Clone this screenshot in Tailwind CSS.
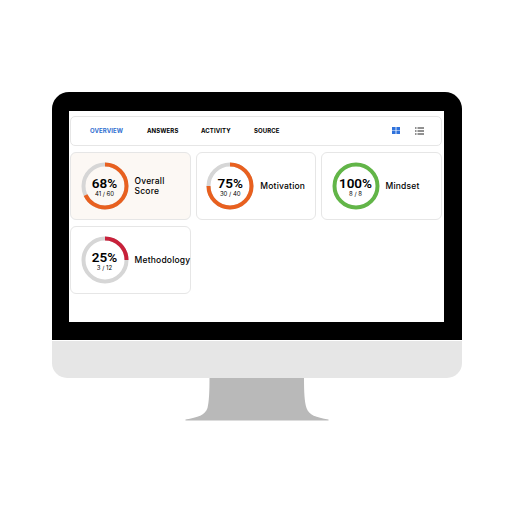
<!DOCTYPE html>
<html lang="en">
<head>
<meta charset="UTF-8">
<title>Overview</title>
<script src="https://cdn.jsdelivr.net/npm/@tailwindcss/browser@4"></script>
</head>
<body class="bg-white h-[513px] overflow-hidden font-['Inter',sans-serif] text-black">
<div class="w-[410.5px] ml-[51.5px] pt-[92px]">
  <!-- monitor frame -->
  <div class="bg-black h-[247.5px] rounded-t-[17px] pl-[17px] pr-[18px] pt-[18.5px]">
    <div class="bg-white h-[211px] pl-[1.5px] pr-[2.5px] pt-[5px]">
      <!-- tabs -->
      <div class="h-[30.5px] border-[1.5px] border-[#e6e6e6] rounded-[5px] flex items-center pl-[19px] pr-[16.5px] text-[6px] font-bold tracking-[0.1px]">
        <span class="w-[57px] text-[#2f6fd0]">OVERVIEW</span>
        <span class="w-[54px]">ANSWERS</span>
        <span class="w-[53px]">ACTIVITY</span>
        <span>SOURCE</span>
        <svg class="ml-auto" width="8" height="7" viewBox="0 0 8 7"><path fill="#2f72dc" d="M0 0h3.6v3.2H0zM4.4 0H8v3.2H4.4zM0 3.8h3.6V7H0zM4.4 3.8H8V7H4.4z"/></svg>
        <svg class="ml-[15px]" width="9" height="8" viewBox="0 0 9 8"><path stroke="#222" stroke-width="1" d="M0 1h1.5M2.5 1h6.5M0 4h1.5M2.5 4h6.5M0 7h1.5M2.5 7h6.5"/></svg>
      </div>
      <!-- score cards -->
      <div class="grid grid-cols-[120.5px_120px_120.5px] gap-x-[5.25px] gap-y-[5.5px] mt-[5.5px]">
        <div class="h-[68.5px] bg-[#fcf8f4] border-[1.5px] border-[#e6e6e6] rounded-[6px] flex items-center pl-[9.5px]">
          <div class="relative w-[48px] h-[48px] shrink-0">
            <svg width="48" height="48" viewBox="0 0 48 48" class="-rotate-90">
              <circle cx="24" cy="24" r="21.5" fill="none" stroke="#d6d6d6" stroke-width="4"/>
              <circle cx="24" cy="24" r="21.5" fill="none" stroke="#e8601f" stroke-width="4" pathLength="100" stroke-dasharray="68 100"/>
            </svg>
            <div class="absolute inset-0 flex flex-col items-center justify-center pt-[3px] font-['Roboto',sans-serif]">
              <span class="text-[13.5px] font-semibold leading-[13px]">68%</span>
              <span class="text-[6px] leading-[8px] font-['Inter',sans-serif]">41 / 60</span>
            </div>
          </div>
          <span class="ml-[6px] text-[8.5px] font-medium leading-[10px] tracking-[0.2px]">Overall<br>Score</span>
        </div>
        <div class="h-[68.5px] bg-white border-[1.5px] border-[#e6e6e6] rounded-[6px] flex items-center pl-[9.5px]">
          <div class="relative w-[48px] h-[48px] shrink-0">
            <svg width="48" height="48" viewBox="0 0 48 48" class="-rotate-90">
              <circle cx="24" cy="24" r="21.5" fill="none" stroke="#d6d6d6" stroke-width="4"/>
              <circle cx="24" cy="24" r="21.5" fill="none" stroke="#e8601f" stroke-width="4" pathLength="100" stroke-dasharray="75 100"/>
            </svg>
            <div class="absolute inset-0 flex flex-col items-center justify-center pt-[3px] font-['Roboto',sans-serif]">
              <span class="text-[13.5px] font-semibold leading-[13px]">75%</span>
              <span class="text-[6px] leading-[8px] font-['Inter',sans-serif]">30 / 40</span>
            </div>
          </div>
          <span class="ml-[6px] text-[8.5px] font-medium leading-[10px] tracking-[0.2px]">Motivation</span>
        </div>
        <div class="h-[68.5px] bg-white border-[1.5px] border-[#e6e6e6] rounded-[6px] flex items-center pl-[9.5px]">
          <div class="relative w-[48px] h-[48px] shrink-0">
            <svg width="48" height="48" viewBox="0 0 48 48" class="-rotate-90">
              <circle cx="24" cy="24" r="21.5" fill="none" stroke="#62b548" stroke-width="4"/>
            </svg>
            <div class="absolute inset-0 flex flex-col items-center justify-center pt-[3px] font-['Roboto',sans-serif]">
              <span class="text-[13.5px] font-semibold leading-[13px]">100%</span>
              <span class="text-[6px] leading-[8px] font-['Inter',sans-serif]">8 / 8</span>
            </div>
          </div>
          <span class="ml-[6px] text-[8.5px] font-medium leading-[10px] tracking-[0.2px]">Mindset</span>
        </div>
        <div class="h-[68.5px] bg-white border-[1.5px] border-[#e6e6e6] rounded-[6px] flex items-center pl-[9.5px]">
          <div class="relative w-[48px] h-[48px] shrink-0">
            <svg width="48" height="48" viewBox="0 0 48 48" class="-rotate-90">
              <circle cx="24" cy="24" r="21.5" fill="none" stroke="#d6d6d6" stroke-width="4"/>
              <circle cx="24" cy="24" r="21.5" fill="none" stroke="#c8213a" stroke-width="4" pathLength="100" stroke-dasharray="25 100"/>
            </svg>
            <div class="absolute inset-0 flex flex-col items-center justify-center pt-[3px] font-['Roboto',sans-serif]">
              <span class="text-[13.5px] font-semibold leading-[13px]">25%</span>
              <span class="text-[6px] leading-[8px] font-['Inter',sans-serif]">3 / 12</span>
            </div>
          </div>
          <span class="ml-[6px] text-[8.5px] font-medium leading-[10px] tracking-[0.2px]">Methodology</span>
        </div>
      </div>
    </div>
  </div>
  <!-- chin -->
  <div class="bg-[#e6e6e6] h-[37px] mt-[1.5px] rounded-b-[15px]"></div>
  <!-- stand -->
  <svg class="block" width="411" height="43" viewBox="0 0 411 43">
    <path fill="#b9b9b9" d="M157.5 0H252C252 14 252.5 24 254.5 30C257 37 264 39.5 276.5 41.5V42.5H133.5V41.5C146 39.5 153 37 155.5 30C157 24 157.5 14 157.5 0Z"/>
  </svg>
</div>
</body>
</html>
